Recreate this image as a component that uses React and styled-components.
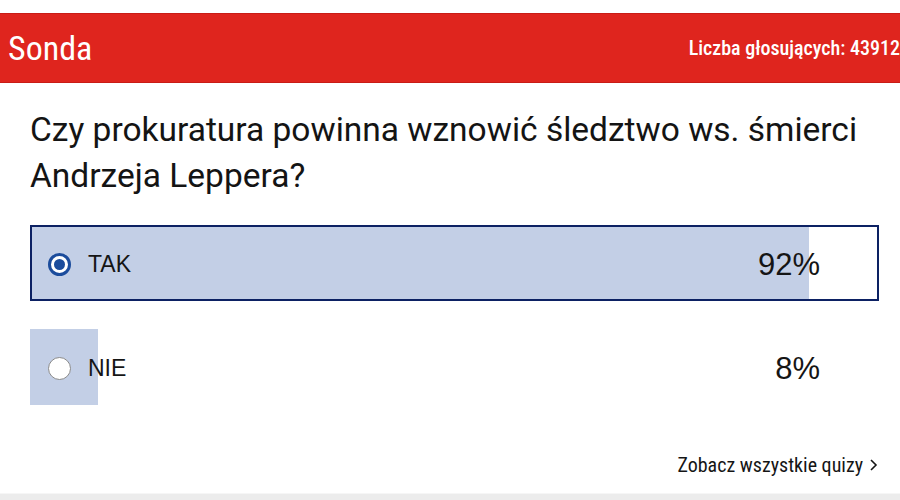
import React from "react";
import styled, { createGlobalStyle } from "styled-components";

const Global = createGlobalStyle`
  html, body { margin: 0; padding: 0; background: #fff; }
  body { font-family: Roboto, "Liberation Sans", sans-serif; overflow: hidden; }
`;

const Page = styled.div`
  width: 900px;
  height: 500px;
  display: flex;
  flex-direction: column;
  overflow: hidden;
`;

const Header = styled.header`
  margin-top: 13px;
  height: 70px;
  box-sizing: border-box;
  background: #df251e;
  border-top: 1px solid #c81c16;
  border-bottom: 1px solid #c81c16;
  display: flex;
  align-items: center;
  justify-content: space-between;
  padding: 0 0 0 8px;
  color: #fff;
  font-family: "Roboto Condensed", "Liberation Sans Narrow", Roboto, sans-serif;
`;

const Title = styled.h2`
  margin: 0;
  font-size: 34px;
  font-weight: 400;
  line-height: 1;
`;

const Voters = styled.span`
  font-size: 20px;
  font-weight: 500;
  white-space: nowrap;
`;

const Body = styled.section`
  flex: 1;
  display: flex;
  flex-direction: column;
  padding: 24px 21px 0 30px;
`;

const Question = styled.h3`
  margin: 0 0 26px;
  font-family: Roboto, "Liberation Sans", sans-serif;
  font-size: 33.5px;
  font-weight: 400;
  line-height: 46px;
  color: #141414;
`;

const Options = styled.div`
  display: flex;
  flex-direction: column;
  gap: 28px;
`;

const Option = styled.label`
  position: relative;
  height: 76px;
  box-sizing: border-box;
  border: ${(p) => (p.$selected ? "2px solid #0c2163" : "none")};
  display: flex;
  align-items: center;
  padding: ${(p) => (p.$selected ? "3px 57px 0 16px" : "3px 59px 0 18px")};
  font-family: "Liberation Sans", Arial, sans-serif;
  color: #151515;
  cursor: pointer;
`;

const Fill = styled.div`
  position: absolute;
  left: 0;
  top: 0;
  bottom: 0;
  background: #c3cfe6;
`;

const Radio = styled.span`
  position: relative;
  width: 23px;
  height: 23px;
  box-sizing: border-box;
  border-radius: 50%;
  background: #fff;
  border: ${(p) => (p.$checked ? "3px solid #1b4c9c" : "1.5px solid #8a8a8a")};
  display: flex;
  align-items: center;
  justify-content: center;
  margin-right: 17px;
  &::after {
    content: "";
    display: ${(p) => (p.$checked ? "block" : "none")};
    width: 11px;
    height: 11px;
    border-radius: 50%;
    background: #1b4c9c;
  }
`;

const Label = styled.span`
  position: relative;
  font-size: 23px;
  flex: 1;
`;

const Percent = styled.span`
  position: relative;
  font-size: 31px;
`;

const Footer = styled.div`
  display: flex;
  justify-content: flex-end;
  align-items: center;
  margin-top: 48px;
  font-family: "Roboto Condensed", "Liberation Sans Narrow", Roboto, sans-serif;
  font-size: 20px;
  font-weight: 400;
  color: #151515;
  gap: 6px;
`;

const BottomStrip = styled.div`
  height: 6px;
  background: #ececec;
  border-top: 1px solid #f6f6f6;
`;

const options = [
  { label: "TAK", pct: 92, selected: true },
  { label: "NIE", pct: 8, selected: false },
];

export default function App() {
  return (
    <>
      <Global />
      <Page>
        <Header>
          <Title>Sonda</Title>
          <Voters>Liczba głosujących: 43912</Voters>
        </Header>
        <Body>
          <Question>
            Czy prokuratura powinna wznowić śledztwo ws. śmierci Andrzeja Leppera?
          </Question>
          <Options>
            {options.map((o) => (
              <Option key={o.label} $selected={o.selected}>
                <Fill style={{ width: `${o.pct}%` }} />
                <Radio $checked={o.selected} />
                <Label>{o.label}</Label>
                <Percent>{o.pct}%</Percent>
              </Option>
            ))}
          </Options>
          <Footer>
            Zobacz wszystkie quizy
            <svg width="10" height="14" viewBox="0 0 10 14">
              <path d="M2 2l5 5-5 5" fill="none" stroke="#151515" strokeWidth="1.6" />
            </svg>
          </Footer>
        </Body>
        <BottomStrip />
      </Page>
    </>
  );
}
